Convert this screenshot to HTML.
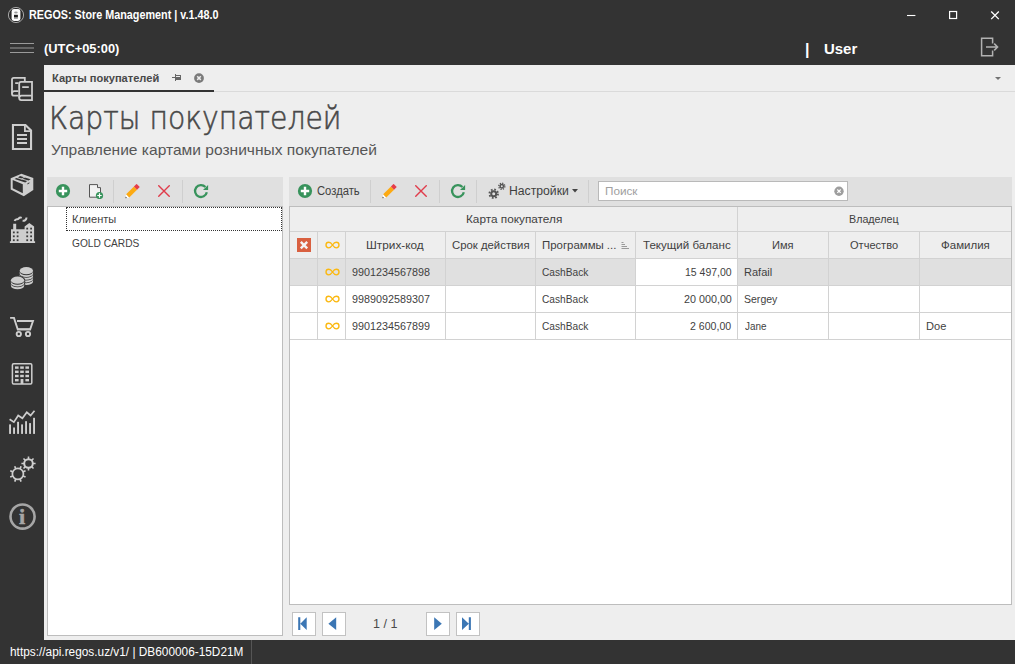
<!DOCTYPE html>
<html lang="ru">
<head>
<meta charset="utf-8">
<title>REGOS: Store Management</title>
<style>
*{box-sizing:border-box;margin:0;padding:0}
html,body{width:1015px;height:664px;overflow:hidden;background:#333333;font-family:"Liberation Sans",sans-serif;}
.a{position:absolute;white-space:nowrap}
#app{position:absolute;left:0;top:0;width:1015px;height:664px;background:#333333;overflow:hidden}
#content{left:44px;top:65px;width:971px;height:575px;background:#eeeeee}
.t{position:absolute;white-space:nowrap;line-height:1;transform-origin:0 0}
.w{color:#fff;font-weight:bold}
.sep{position:absolute;width:1px;background:#cfcfcf}
.tb{position:absolute;background:#e0e0e0}
.cell{position:absolute;font-size:11px;color:#3c3c3c;line-height:1;white-space:nowrap}
.vl{position:absolute;width:1px;background:#d2d2d2}
.hl{position:absolute;height:1px;background:#d2d2d2}
.pb{position:absolute;width:24px;height:24px;background:#fff;border:1px solid #c2c2c2}
</style>
</head>
<body>
<div id="app">

<!-- title bar -->
<svg class="a" style="left:7px;top:6px" width="18" height="18" viewBox="7 6 18 18">
 <circle cx="16" cy="15" r="7.600" fill="#2a2a2a" stroke="#b4b4b4" stroke-width="0.900"/>
 <rect x="11.600" y="9.100" width="8.800" height="11.900" rx="2.400" fill="#fbfbfb"/>
 <ellipse cx="15.950" cy="12.500" rx="1.800" ry="1.100" fill="#9a9a9a"/>
 <rect x="14" y="14.800" width="3.900" height="2.200" fill="#1c1c1c"/>
 <rect x="14" y="17" width="3.900" height="1.700" fill="#8a8a8a"/>
</svg>

<!-- window buttons -->
<svg class="a" style="left:900px;top:5px" width="110" height="20" viewBox="900 5 110 20" fill="none" stroke="#fff">
 <path d="M907 15.500h8.400" stroke-width="1.100"/>
 <rect x="949.600" y="11.500" width="7" height="7" stroke-width="1.200"/>
 <path d="M991.200 11.500l7.600 7.600M998.800 11.500l-7.600 7.600" stroke-width="1.300"/>
</svg>

<!-- header -->
<svg class="a" style="left:9px;top:42px" width="26" height="12" viewBox="0 0 26 12">
 <path d="M1 1.5h24M1 6h24M1 10.5h24" stroke="#9a9a9a" stroke-width="1"/>
</svg>
<svg class="a" style="left:978px;top:35px" width="24" height="24" viewBox="978 35 24 24" fill="none" stroke="#b2b2b2" stroke-width="1.500">
 <path d="M992.600 43.600V38.200H981.600V55.800H992.600V50.600"/>
 <path d="M986 47H997.400M994.200 43.600L997.600 47L994.200 50.400"/>
</svg>

<!-- SIDEBAR -->

<svg class="a" style="left:0;top:65px" width="44" height="575" viewBox="0 65 44 575" fill="none" stroke="#cecece" stroke-width="1.6">
 <!-- 1 copy docs -->
 <g stroke-width="1.800">
 <path d="M24.800 81V77.800H13.800a1.800 1.800 0 0 0-1.800 1.800V93.700a2 2 0 0 0 2 2H18.400"/>
 <path d="M12 93.400a2.200 2.200 0 0 1 2.200-2.200H18.400M15.200 83.100H18.400"/>
 <path d="M32 81.900H21a1.800 1.800 0 0 0-1.800 1.800V98.100a2 2 0 0 0 2 2H32z"/>
 <path d="M19.200 97.800a2.200 2.200 0 0 1 2.200-2.200H32M22.200 87.200H28.800"/>
 </g>
 <!-- 2 document -->
 <path d="M12.950 124.950h12.500l5.600 5.600V148.950H12.950z" stroke-width="2.100"/>
 <path d="M24.900 125v6.100h6.100" stroke-width="1.800"/>
 <path d="M17 135h10M17 139h10M17 143h10" stroke-width="1.800"/>
 <!-- 3 box -->
 <g stroke="none">
 <path fill="#cecece" d="M21.400 173.800L33.300 177.900V190L23.800 196.300L10.700 189.500V178.300z"/>
 <path fill="#333" d="M12.700 180L22.800 184.200V193.200L12.700 188.200z"/>
 <path fill="#333" d="M20 175.900L30.600 179.300L28.600 180.600L18 177.400z"/>
 <path fill="#333" d="M16.400 177.900L27.200 181.100L25.300 182.400L14.600 179z"/>
 <path fill="#cecece" d="M20.400 179.300L24.600 176.700L25.600 177L21.400 179.600z"/>
 <path fill="#333" d="M27.400 183.500L29.400 182.200V183.200L27.400 184.500z"/>
 </g>
 <!-- 4 factory -->
 <path stroke="none" fill="#cecece" d="M9.900 243.100V241.300H11V229.200H13.200V223.800H16.200V229.200H24.600V226.400L29.300 222.900L34.100 226.400V241.300H35.100V243.100z"/>
 <g stroke="none" fill="#3a3a3a"><rect x="12.9" y="231.5" width="1.800" height="1.800"/><rect x="12.9" y="235.4" width="1.800" height="1.800"/><rect x="12.9" y="239.3" width="1.800" height="1.800"/><rect x="16.7" y="231.5" width="1.800" height="1.800"/><rect x="16.7" y="235.4" width="1.800" height="1.800"/><rect x="16.7" y="239.3" width="1.800" height="1.800"/><rect x="26.3" y="227.7" width="1.800" height="1.800"/><rect x="26.3" y="231.5" width="1.800" height="1.800"/><rect x="26.3" y="235.4" width="1.800" height="1.800"/><rect x="26.3" y="239.3" width="1.800" height="1.800"/><rect x="30.2" y="227.7" width="1.800" height="1.800"/><rect x="30.2" y="231.5" width="1.800" height="1.800"/><rect x="30.2" y="235.4" width="1.800" height="1.800"/><rect x="30.2" y="239.3" width="1.800" height="1.800"/></g>
 <path d="M14.600 221C15.500 218.400 17.600 219.900 18.600 218.600S20.600 217.300 21.700 217.800M22.600 220.800C24.600 221 26.500 219.800 26.500 217.500" stroke-width="2"/>
 <!-- 5 coins -->
 <g stroke="none" fill="#cecece"><ellipse cx="26.35" cy="270.7" rx="6.7" ry="3.6"/><path d="M19.65 271.60A6.7 3.6 0 0 0 33.05 271.60v1.9A6.7 3.6 0 0 1 19.65 273.50z"/><path d="M19.65 274.25A6.7 3.6 0 0 0 33.05 274.25v1.9A6.7 3.6 0 0 1 19.65 276.15z"/><path d="M19.65 276.90A6.7 3.6 0 0 0 33.05 276.90v1.9A6.7 3.6 0 0 1 19.65 278.80z"/><path d="M19.65 279.55A6.7 3.6 0 0 0 33.05 279.55v1.9A6.7 3.6 0 0 1 19.65 281.45z"/></g>
 <path stroke="none" fill="#333" d="M10 280.200a7.600 4.500 0 0 1 15.200 0v6.500h-15.200z"/>
 <g stroke="none" fill="#cecece"><ellipse cx="17.55" cy="280.2" rx="6.65" ry="3.6"/><path d="M10.90 281.10A6.65 3.6 0 0 0 24.20 281.10v1.9A6.65 3.6 0 0 1 10.90 283.00z"/><path d="M10.90 283.75A6.65 3.6 0 0 0 24.20 283.75v1.9A6.65 3.6 0 0 1 10.90 285.65z"/></g>
 <!-- 6 cart -->
 <path d="M10.100 317.900h3.900l3.800 11.600h12.300l2.900-8.500H17" stroke-width="1.900"/>
 <path d="M18 329h12" stroke-width="1.400"/>
 <circle cx="18.800" cy="334" r="2.150" stroke-width="1.900"/>
 <circle cx="28" cy="334" r="2.150" stroke-width="1.900"/>
 <!-- 7 building -->
 <rect x="12.400" y="363.800" width="19.400" height="20.200" rx="1.200" stroke-width="1.500"/>
 <g stroke="none" fill="#cecece">
  <rect x="15" y="366.400" width="3.600" height="2.400"/><rect x="20.200" y="366.400" width="3.600" height="2.400"/><rect x="25.400" y="366.400" width="3.600" height="2.400"/>
  <rect x="15" y="370.600" width="3.600" height="2.400"/><rect x="20.200" y="370.600" width="3.600" height="2.400"/><rect x="25.400" y="370.600" width="3.600" height="2.400"/>
  <rect x="15" y="374.800" width="3.600" height="2.400"/><rect x="20.200" y="374.800" width="3.600" height="2.400"/><rect x="25.400" y="374.800" width="3.600" height="2.400"/>
  <rect x="15" y="379" width="3.600" height="2.400"/><rect x="20.600" y="379" width="2.800" height="5"/><rect x="25.400" y="379" width="3.600" height="2.400"/>
 </g>
 <!-- 8 chart -->
 <path d="M9.600 419.200L13.900 422.100L18.200 415.500L22.400 418.300L26.800 412.300L30.600 415.500L34.500 410.700" stroke-width="1.700"/>
 <g stroke="none" fill="#cecece"><rect x="9.1" y="424.4" width="1.900" height="9.5"/><rect x="13.1" y="427.5" width="1.900" height="6.4"/><rect x="17.1" y="421.8" width="1.900" height="12.1"/><rect x="21.1" y="424.4" width="1.900" height="9.5"/><rect x="25.1" y="421.2" width="1.900" height="12.7"/><rect x="29.1" y="423.1" width="1.900" height="10.8"/><rect x="33.1" y="417.8" width="1.900" height="16.1"/></g>
 <!-- 9 gears -->
 <circle cx="17.9" cy="473.9" r="5.5" stroke-width="1.7"/><path d="M22.98 476.00L25.57 477.08M20.00 478.98L21.08 481.57M15.80 478.98L14.72 481.57M12.82 476.00L10.23 477.08M12.82 471.80L10.23 470.72M15.80 468.82L14.72 466.23M20.00 468.82L21.08 466.23M22.98 471.80L25.57 470.72" stroke-width="1.7"/>
 <circle cx="28.5" cy="463.5" r="4.3" stroke-width="2.0"/><path d="M32.80 463.50L35.60 463.50M31.54 466.54L33.52 468.52M28.50 467.80L28.50 470.60M25.46 466.54L23.48 468.52M24.20 463.50L21.40 463.50M25.46 460.46L23.48 458.48M28.50 459.20L28.50 456.40M31.54 460.46L33.52 458.48" stroke-width="1.6"/>
 <!-- 10 info -->
 <circle cx="22.550" cy="516.550" r="12.050" stroke="#a6a6a6" stroke-width="2.600"/>
</svg>


<!-- CONTENT -->
<div class="a" id="content"></div>

<!-- tab strip -->
<div class="a" style="left:44px;top:91px;width:971px;height:1px;background:#dadada"></div>
<div class="a" style="left:44px;top:90px;width:170px;height:2px;background:#333333"></div>
<svg class="a" style="left:170px;top:72px" width="14" height="12" viewBox="170 72 14 12" fill="#666"><rect x="172" y="77" width="3" height="1"/><rect x="175" y="74" width="1" height="7"/><rect x="176" y="75" width="5" height="1"/><rect x="180" y="75" width="1" height="5"/><rect x="176" y="77" width="5" height="3"/></svg>
<svg class="a" style="left:193px;top:72px" width="12" height="12" viewBox="193 72 12 12"><circle cx="199" cy="78.100" r="4.900" fill="#7a7a7a"/><path d="M197.200 76.300l3.600 3.600M200.800 76.300l-3.600 3.600" stroke="#eee" stroke-width="1.500"/></svg>
<svg class="a" style="left:994px;top:76px" width="8" height="5" viewBox="0 0 8 5"><path d="M1 1h6L4 4z" fill="#727272"/></svg>

<!-- headings -->

<!-- left panel -->
<div class="tb" style="left:47px;top:177px;width:236px;height:29px"></div>
<div class="a" style="left:47px;top:206px;width:236px;height:430px;background:#fff;border:1px solid #bdbdbd"></div>
<div class="a" style="left:66px;top:207px;width:216px;height:24px;border:1px dotted #333"></div>
<div class="sep" style="left:113px;top:180px;height:23px"></div>
<div class="sep" style="left:182px;top:180px;height:23px"></div>

<!-- right panel -->
<div class="tb" style="left:289px;top:177px;width:723px;height:29px"></div>
<div class="sep" style="left:370px;top:180px;height:23px"></div>
<div class="sep" style="left:439px;top:180px;height:23px"></div>
<div class="sep" style="left:476px;top:180px;height:23px"></div>
<div class="sep" style="left:588px;top:180px;height:23px"></div>
<svg class="a" style="left:572px;top:189px" width="6" height="4" viewBox="0 0 6 4"><path d="M0 0h6L3 3.5z" fill="#444"/></svg>
<div class="a" style="left:598px;top:181px;width:250px;height:20px;background:#fff;border:1px solid #b9b9b9"></div>
<svg class="a" style="left:834px;top:186px" width="10" height="10" viewBox="0 0 10 10">
 <circle cx="5" cy="5.200" r="4.700" fill="#9e9e9e"/><path d="M3.3 3.5l3.4 3.4M6.7 3.5L3.3 6.9" stroke="#fff" stroke-width="1.2"/>
</svg>

<!-- grid -->
<div class="a" id="grid" style="left:289px;top:206px;width:723px;height:399px;background:#fff;border:1px solid #bdbdbd"></div>
<div class="a" style="left:290px;top:207px;width:721px;height:51px;background:#eeeeee"></div>
<div class="a" style="left:290px;top:259px;width:721px;height:26px;background:#e0e0e0"></div>
<div class="a" style="left:636px;top:259px;width:101px;height:26px;background:#fff"></div>
<div class="hl" style="left:290px;top:231px;width:721px"></div>
<div class="hl" style="left:290px;top:258px;width:721px"></div>
<div class="hl" style="left:290px;top:285px;width:721px"></div>
<div class="hl" style="left:290px;top:312px;width:721px"></div>
<div class="hl" style="left:290px;top:339px;width:721px"></div>
<div class="vl" style="left:317px;top:232px;height:108px"></div>
<div class="vl" style="left:345px;top:232px;height:108px"></div>
<div class="vl" style="left:445px;top:232px;height:108px"></div>
<div class="vl" style="left:535px;top:232px;height:108px"></div>
<div class="vl" style="left:635px;top:232px;height:108px"></div>
<div class="vl" style="left:828px;top:232px;height:108px"></div>
<div class="vl" style="left:919px;top:232px;height:108px"></div>
<div class="vl" style="left:737px;top:207px;height:133px"></div>
<svg class="a" style="left:297px;top:238px" width="14" height="14" viewBox="0 0 14 14"><rect width="14" height="14" fill="#d96040"/><path d="M3.800 3.900l6.400 6.400M10.200 3.900l-6.400 6.400" stroke="#f4f4f4" stroke-width="2.400"/></svg>
<svg class="a" style="left:324.500px;top:240.8px" width="15" height="8" viewBox="0 0 15 8"><path d="M7.500 4C6.200 2 5 1.200 3.800 1.200A2.800 2.800 0 0 0 3.800 6.800C5 6.800 6.200 6 7.500 4C8.800 2 10 1.200 11.200 1.200A2.800 2.800 0 0 1 11.200 6.800C10 6.800 8.800 6 7.500 4z" fill="none" stroke="#fbb810" stroke-width="1.350"/></svg>
<svg class="a" style="left:324.500px;top:267.8px" width="15" height="8" viewBox="0 0 15 8"><path d="M7.500 4C6.200 2 5 1.200 3.800 1.200A2.800 2.800 0 0 0 3.800 6.800C5 6.800 6.200 6 7.500 4C8.800 2 10 1.200 11.200 1.200A2.800 2.800 0 0 1 11.200 6.800C10 6.800 8.800 6 7.500 4z" fill="none" stroke="#fbb810" stroke-width="1.350"/></svg>
<svg class="a" style="left:324.500px;top:294.8px" width="15" height="8" viewBox="0 0 15 8"><path d="M7.500 4C6.200 2 5 1.200 3.800 1.200A2.800 2.800 0 0 0 3.800 6.800C5 6.800 6.200 6 7.500 4C8.800 2 10 1.200 11.200 1.200A2.800 2.800 0 0 1 11.200 6.800C10 6.800 8.800 6 7.500 4z" fill="none" stroke="#fbb810" stroke-width="1.350"/></svg>
<svg class="a" style="left:324.500px;top:321.8px" width="15" height="8" viewBox="0 0 15 8"><path d="M7.500 4C6.200 2 5 1.200 3.800 1.200A2.800 2.800 0 0 0 3.800 6.800C5 6.800 6.200 6 7.500 4C8.800 2 10 1.200 11.200 1.200A2.800 2.800 0 0 1 11.200 6.800C10 6.800 8.800 6 7.500 4z" fill="none" stroke="#fbb810" stroke-width="1.350"/></svg>
<svg class="a" style="left:621px;top:242px" width="9" height="8" viewBox="0 0 9 8"><path d="M0.500 0.500h2M0.500 2.500h3.500M0.500 4.500h5.500M0.500 6.500h7.500" stroke="#9a9a9a" stroke-width="1"/></svg>
<!-- ICONS -->
<svg class="a" style="left:55px;top:183px" width="16" height="16" viewBox="-8 -8 16 16"><circle r="7.100" fill="#38935c"/><path d="M-4.200 0h8.400M0 -4.200v8.400" stroke="#fff" stroke-width="2.400"/></svg>
<svg class="a" style="left:88px;top:183px" width="16" height="16" viewBox="88 183 16 16"><path d="M89.500 184.600h8v3h3v9.600h-11z" fill="#f2f2f2" stroke="#555" stroke-width="1"/><circle cx="99.500" cy="195.500" r="3.600" fill="#38935c"/><path d="M97.300 195.500h4.400M99.500 193.300v4.400" stroke="#fff" stroke-width="1.200"/></svg>
<svg class="a" style="left:124.5px;top:183.7px" width="15" height="15" viewBox="0 0 15 15">
<g transform="translate(0.300,14.300) rotate(-45)"><path d="M0 0L3 -2.200H3.400V2.200H3z" fill="#fff"/><path d="M0 0L1.500 -1.100V1.100z" fill="#555"/><rect x="3.400" y="-2.200" width="11" height="4.400" fill="#fcaa13"/><rect x="14.400" y="-2.200" width="3.800" height="4.400" fill="#e63d4a"/></g></svg>
<svg class="a" style="left:158px;top:185px" width="12" height="12" viewBox="0 0 12 12"><path d="M0.300 0.300l11.400 11.400M11.700 0.300L0.300 11.700" stroke="#e03c4b" stroke-width="1.400"/></svg>
<svg class="a" style="left:192.00px;top:181.90px" width="18" height="18" viewBox="-9 -9 18 18"><path d="M5.82 1.24A5.95 5.95 0 1 1 4.42 -3.98" fill="none" stroke="#38935c" stroke-width="2.300"/><path d="M7.100 -6.100V-1H2z" fill="#38935c"/></svg>
<svg class="a" style="left:296.7px;top:183.1px" width="16" height="16" viewBox="-8 -8 16 16"><circle r="7.100" fill="#38935c"/><path d="M-4.200 0h8.400M0 -4.200v8.400" stroke="#fff" stroke-width="2.400"/></svg>
<svg class="a" style="left:382px;top:183.7px" width="15" height="15" viewBox="0 0 15 15">
<g transform="translate(0.300,14.300) rotate(-45)"><path d="M0 0L3 -2.200H3.400V2.200H3z" fill="#fff"/><path d="M0 0L1.500 -1.100V1.100z" fill="#555"/><rect x="3.400" y="-2.200" width="11" height="4.400" fill="#fcaa13"/><rect x="14.400" y="-2.200" width="3.800" height="4.400" fill="#e63d4a"/></g></svg>
<svg class="a" style="left:415px;top:185.2px" width="12" height="12" viewBox="0 0 12 12"><path d="M0.300 0.300l11.400 11.400M11.700 0.300L0.300 11.700" stroke="#e03c4b" stroke-width="1.400"/></svg>
<svg class="a" style="left:448.80px;top:182.10px" width="18" height="18" viewBox="-9 -9 18 18"><path d="M5.82 1.24A5.95 5.95 0 1 1 4.42 -3.98" fill="none" stroke="#38935c" stroke-width="2.300"/><path d="M7.100 -6.100V-1H2z" fill="#38935c"/></svg>
<svg class="a" style="left:488px;top:182px" width="18" height="18" viewBox="488 182 18 18" fill="none" stroke="#555">
<circle cx="493.700" cy="193.700" r="2.500" stroke-width="2"/><circle cx="493.700" cy="193.700" r="4.300" stroke-width="1.800" stroke-dasharray="1.700 1.677"/>
<circle cx="501.800" cy="186.300" r="1.700" stroke-width="1.500"/><circle cx="501.800" cy="186.300" r="3" stroke-width="1.400" stroke-dasharray="1.200 1.156"/></svg>
<!-- GRIDTEXT -->
<div class="t" id="ttl" style="left:29.23px;top:9.30px;font-size:12px;color:#fff;font-weight:bold;transform:scaleX(0.9002);">REGOS: Store Management | v.1.48.0</div>
<div class="t" id="utc" style="left:44.31px;top:41.60px;font-size:13.3px;color:#fff;font-weight:bold;transform:scaleX(0.9664);">(UTC+05:00)</div>
<div class="t" id="bar" style="left:805.00px;top:41.50px;font-size:16px;color:#fff;font-weight:bold;">|</div>
<div class="t" id="usr" style="left:823.69px;top:41.50px;font-size:14.7px;color:#fff;font-weight:bold;transform:scaleX(1.0185);">User</div>
<div class="t" id="info" style="left:19.28px;top:506.80px;font-size:21px;color:#a6a6a6;font-weight:bold;font-family:'Liberation Serif',serif;transform:scaleX(1.0556);-webkit-text-stroke:0.5px #a6a6a6;">i</div>
<div class="t" id="tab" style="left:51.91px;top:72.00px;font-size:11.6px;color:#484848;font-weight:bold;transform:scaleX(0.9569);">Карты покупателей</div>
<div class="t" id="h1" style="left:49.33px;top:102.20px;font-size:32.5px;color:#484848;font-weight:200;font-family:'DejaVu Sans','Liberation Sans',sans-serif;transform:scaleX(0.8696);-webkit-text-stroke:0.6px #484848;">Карты покупателей</div>
<div class="t" id="h2" style="left:50.68px;top:143.00px;font-size:14.8px;color:#565656;transform:scaleX(1.0517);">Управление картами розничных покупателей</div>
<div class="t" id="tr1" style="left:72.40px;top:213.90px;font-size:11.2px;color:#3f3f3f;transform:scaleX(0.9865);">Клиенты</div>
<div class="t" id="tr2" style="left:72.43px;top:237.80px;font-size:11.2px;color:#3f3f3f;transform:scaleX(0.9101);">GOLD CARDS</div>
<div class="t" id="bcreate" style="left:317.23px;top:185.10px;font-size:12.3px;color:#3f3f3f;transform:scaleX(0.9138);">Создать</div>
<div class="t" id="bsett" style="left:509.30px;top:185.10px;font-size:12.3px;color:#3f3f3f;transform:scaleX(0.9916);">Настройки</div>
<div class="t" id="srch" style="left:605.18px;top:185.90px;font-size:11px;color:#a0a0a0;transform:scaleX(1.0658);">Поиск</div>
<div class="t" id="g1" style="left:466.28px;top:214.30px;font-size:11.2px;color:#3f3f3f;transform:scaleX(1.0531);">Карта покупателя</div>
<div class="t" id="g2" style="left:849.21px;top:214.30px;font-size:11.2px;color:#3f3f3f;transform:scaleX(0.9572);">Владелец</div>
<div class="t" id="c3" style="left:366.08px;top:239.90px;font-size:11.2px;color:#3f3f3f;transform:scaleX(1.0560);">Штрих-код</div>
<div class="t" id="c4" style="left:451.90px;top:239.90px;font-size:11.2px;color:#3f3f3f;transform:scaleX(1.0144);">Срок действия</div>
<div class="t" id="c5" style="left:542.19px;top:239.90px;font-size:11.2px;color:#3f3f3f;transform:scaleX(1.0207);">Программы ...</div>
<div class="t" id="c6" style="left:642.89px;top:239.90px;font-size:11.2px;color:#3f3f3f;transform:scaleX(1.0344);">Текущий баланс</div>
<div class="t" id="c7" style="left:772.00px;top:239.90px;font-size:11.2px;color:#3f3f3f;transform:scaleX(0.9907);">Имя</div>
<div class="t" id="c8" style="left:849.70px;top:239.90px;font-size:11.2px;color:#3f3f3f;transform:scaleX(0.9876);">Отчество</div>
<div class="t" id="c9" style="left:940.79px;top:239.90px;font-size:11.2px;color:#3f3f3f;transform:scaleX(1.0274);">Фамилия</div>
<div class="t" id="r1a" style="left:352.11px;top:266.90px;font-size:11.2px;color:#3f3f3f;transform:scaleX(0.9627);">9901234567898</div>
<div class="t" id="r2a" style="left:352.11px;top:293.90px;font-size:11.2px;color:#3f3f3f;transform:scaleX(0.9627);">9989092589307</div>
<div class="t" id="r3a" style="left:352.11px;top:320.90px;font-size:11.2px;color:#3f3f3f;transform:scaleX(0.9627);">9901234567899</div>
<div class="t" id="r1b" style="left:542.13px;top:266.90px;font-size:11.2px;color:#3f3f3f;transform:scaleX(0.9086);">CashBack</div>
<div class="t" id="r2b" style="left:542.13px;top:293.90px;font-size:11.2px;color:#3f3f3f;transform:scaleX(0.9086);">CashBack</div>
<div class="t" id="r3b" style="left:542.13px;top:320.90px;font-size:11.2px;color:#3f3f3f;transform:scaleX(0.9086);">CashBack</div>
<div class="t" id="r1c" style="left:685.12px;top:266.90px;font-size:11.2px;color:#3f3f3f;transform:scaleX(0.9372);">15 497,00</div>
<div class="t" id="r2c" style="left:683.91px;top:293.90px;font-size:11.2px;color:#3f3f3f;transform:scaleX(0.9615);">20 000,00</div>
<div class="t" id="r3c" style="left:690.42px;top:320.90px;font-size:11.2px;color:#3f3f3f;transform:scaleX(0.9447);">2 600,00</div>
<div class="t" id="r1d" style="left:744.20px;top:266.90px;font-size:11.2px;color:#3f3f3f;transform:scaleX(0.9859);">Rafail</div>
<div class="t" id="r2d" style="left:744.22px;top:293.90px;font-size:11.2px;color:#3f3f3f;transform:scaleX(0.9407);">Sergey</div>
<div class="t" id="r3d" style="left:744.72px;top:320.90px;font-size:11.2px;color:#3f3f3f;transform:scaleX(0.8858);">Jane</div>
<div class="t" id="r3e" style="left:926.30px;top:320.90px;font-size:11.2px;color:#3f3f3f;transform:scaleX(0.9902);">Doe</div>
<div class="t" id="pg" style="left:372.99px;top:617.60px;font-size:12px;color:#4a4a4a;transform:scaleX(1.0427);">1 / 1</div>
<div class="t" id="stat" style="left:10.20px;top:646.00px;font-size:12px;color:#fff;transform:scaleX(0.9868);">https://api.regos.uz/v1/ | DB600006-15D21M</div>

<!-- pager -->
<div class="pb" style="left:292px;top:612px"></div>
<div class="pb" style="left:322px;top:612px"></div>
<div class="pb" style="left:426px;top:612px"></div>
<div class="pb" style="left:456px;top:612px"></div>
<svg class="a" style="left:292px;top:612px" width="24" height="24" viewBox="292 612 24 24" fill="#3b76b4"><path d="M298.200 617.300h2.100v12.700h-2.100zM306.700 617.300v12.700L300.300 623.650z"/></svg>
<svg class="a" style="left:322px;top:612px" width="24" height="24" viewBox="322 612 24 24" fill="#3b76b4"><path d="M336.200 617.300v12.700L328.400 623.650z"/></svg>
<svg class="a" style="left:426px;top:612px" width="24" height="24" viewBox="426 612 24 24" fill="#3b76b4"><path d="M434.200 617.300v12.700l7.600-6.350z"/></svg>
<svg class="a" style="left:456px;top:612px" width="24" height="24" viewBox="456 612 24 24" fill="#3b76b4"><path d="M468.800 617.300h2.100v12.700h-2.100zM462 617.300v12.700l6.800-6.350z"/></svg>

<!-- status bar -->
<div class="a" style="left:251px;top:640px;width:1px;height:24px;background:#555"></div>

</div>
</body>
</html>
